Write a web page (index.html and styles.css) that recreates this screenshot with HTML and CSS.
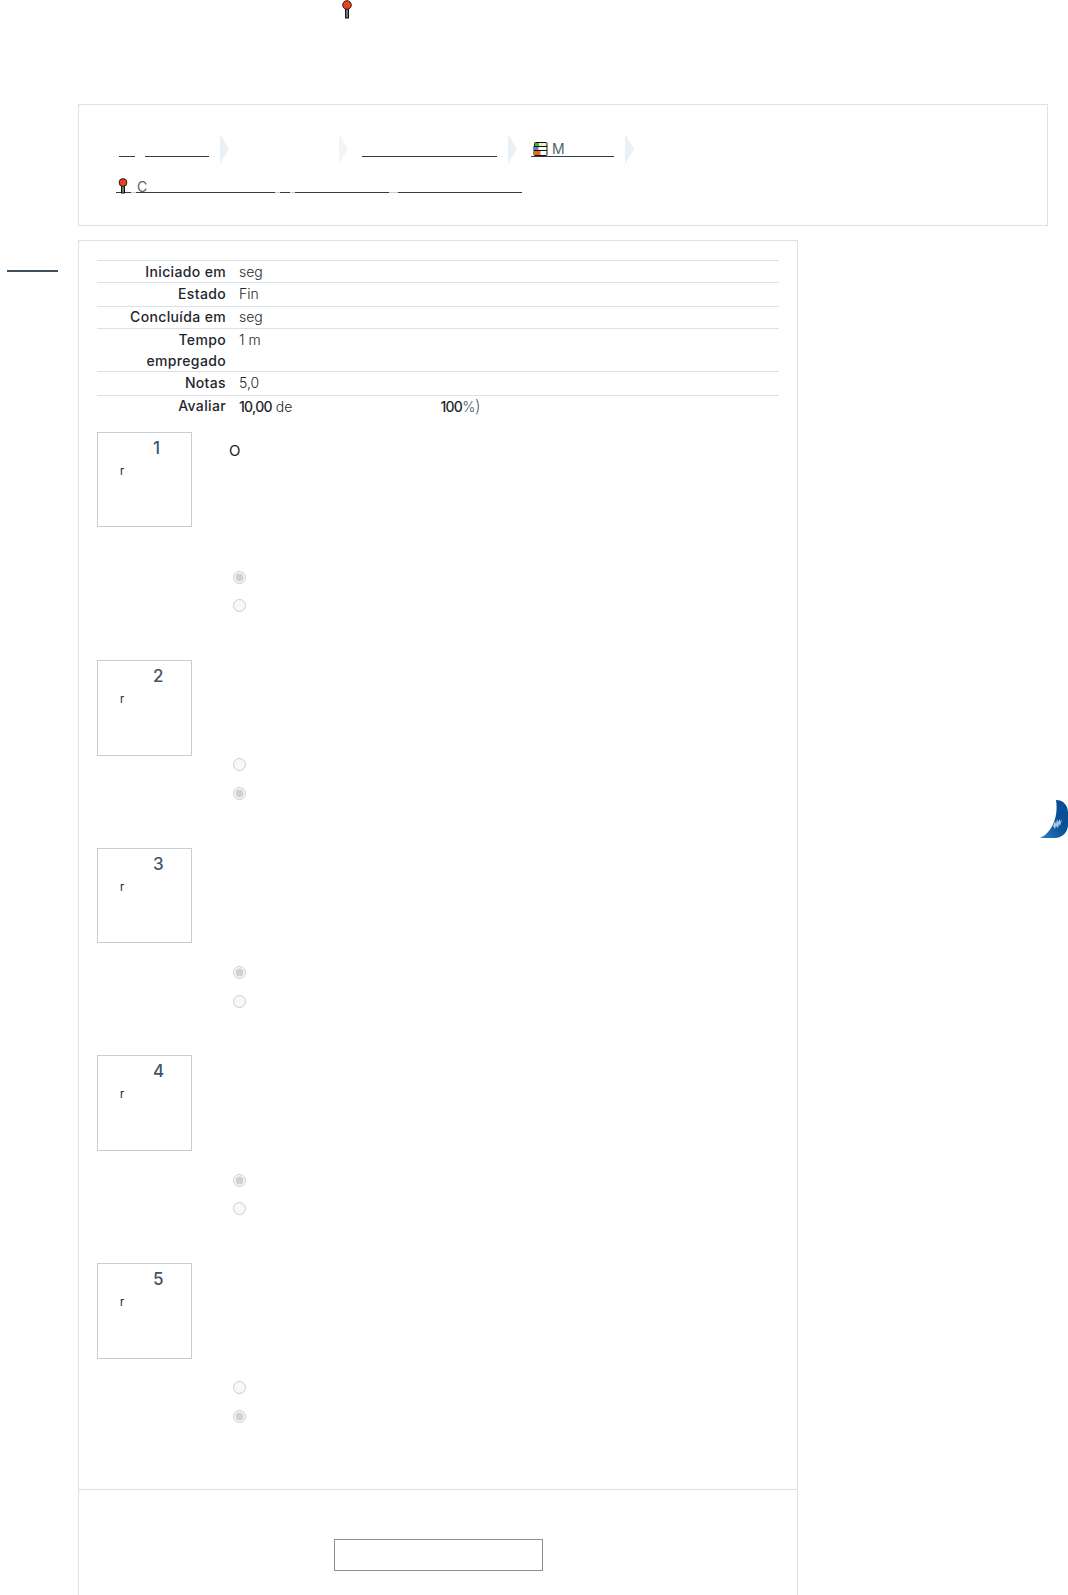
FILE: index.html
```html
<!DOCTYPE html>
<html lang="pt-BR">
<head>
<meta charset="utf-8">
<title>Revisão da tentativa</title>
<link rel="stylesheet" href="styles.css">
</head>
<body>
<div class="page">
  <header class="top">
    <svg class="pin" viewBox="0 0 10 19"><rect x="3.5" y="7" width="3" height="11" fill="#777" stroke="#111"/><circle cx="5" cy="5" r="4.3" fill="#f0401a" stroke="#222"/></svg>
  </header>

  <nav class="crumbs">
    <div class="crumb-row">
      <span class="link w-home"></span><span class="gap-a"></span><span class="link w-a"></span>
      <span class="chev"></span><span class="spacer-b"></span>
      <span class="chev chev-light"></span><span class="spacer-c"></span>
      <span class="link w-c"></span>
      <span class="chev"></span><span class="spacer-d"></span>
      <span class="link w-m">
        <svg class="book" viewBox="0 0 15 14"><rect x="1.5" y="0.5" width="12.5" height="4" rx="1" fill="#e9f5c8" stroke="#111"/><rect x="2" y="1" width="4" height="3" fill="#44bb11"/><rect x="1" y="4.5" width="13" height="4" fill="#fff" stroke="#111"/><rect x="1.5" y="5" width="4" height="3" fill="#3b8ee0"/><rect x="1" y="8.5" width="13" height="5" rx="1" fill="#fff" stroke="#111"/><rect x="1.5" y="9" width="6" height="4" fill="#f0651a"/></svg>
        <span class="crumb-text">M</span>
      </span>
      <span class="chev"></span>
    </div>
    <div class="crumb-row crumb-row-2">
      <span class="link w-pin">
        <svg class="pin pin-small" viewBox="0 0 10 16"><rect x="3.5" y="6" width="3" height="9" fill="#777" stroke="#111"/><circle cx="5" cy="4.5" r="3.9" fill="#f0401a" stroke="#222"/></svg>
      </span>
      <span class="gap-s"></span>
      <span class="link w-t1"><span class="crumb-text">C</span></span>
      <span class="gap-s"></span>
      <span class="link w-t2"></span>
      <span class="gap-s"></span>
      <span class="link w-t3"></span>
      <span class="gap-m"></span>
      <span class="link w-t4"></span>
    </div>
  </nav>

  <div class="main">
    <div class="side-line"></div>
    <section class="card">
      <div class="summary">
        <div class="row"><div class="label">Iniciado em</div><div class="value">seg</div></div>
        <div class="row"><div class="label">Estado</div><div class="value">Fin</div></div>
        <div class="row"><div class="label">Concluída em</div><div class="value">seg</div></div>
        <div class="row"><div class="label">Tempo empregado</div><div class="value">1 m</div></div>
        <div class="row"><div class="label">Notas</div><div class="value">5,0</div></div>
        <div class="row"><div class="label">Avaliar</div><div class="value"><b>10,00</b> de<span class="grade-gap"></span><b>100</b><span class="pct">%<span class="paren">)</span></span></div></div>
      </div>

      <article class="que que-1">
        <div class="info"><div class="num">1</div><div class="state">r</div></div>
        <div class="content"><p class="qtext">O</p>
          <div class="answers"><input type="radio" disabled checked><input type="radio" disabled></div></div>
      </article>
      <article class="que que-2">
        <div class="info"><div class="num">2</div><div class="state">r</div></div>
        <div class="content"><div class="answers"><input type="radio" disabled><input type="radio" disabled checked></div></div>
      </article>
      <article class="que que-3">
        <div class="info"><div class="num">3</div><div class="state">r</div></div>
        <div class="content"><div class="answers"><input type="radio" disabled checked><input type="radio" disabled></div></div>
      </article>
      <article class="que que-4">
        <div class="info"><div class="num">4</div><div class="state">r</div></div>
        <div class="content"><div class="answers"><input type="radio" disabled checked><input type="radio" disabled></div></div>
      </article>
      <article class="que que-5">
        <div class="info"><div class="num">5</div><div class="state">r</div></div>
        <div class="content"><div class="answers"><input type="radio" disabled><input type="radio" disabled checked></div></div>
      </article>

      <footer class="card-foot"><button class="finish" type="button" aria-label="Terminar revisão"></button></footer>
    </section>
  </div>

  <svg class="widget" viewBox="0 0 28 38">
    <defs><linearGradient id="moon" x1="0" y1="1" x2="1" y2="0"><stop offset="0" stop-color="#2f7fc0"/><stop offset=".5" stop-color="#0a5299"/><stop offset="1" stop-color="#064c96"/></linearGradient></defs>
    <path d="M16 0C24 0 28 6 28 13V25C28 32 22 38 15 38H0C10 34 19 19 16 0Z" fill="url(#moon)"/>
    <path d="M13 26l2-5 1 3 1-5 1 3 2-3 0 3 2-3-2 7-1-2-1 4-2-2-1 3z" fill="#dfeaf5" opacity=".75"/>
  </svg>
</div>
</body>
</html>
```
FILE: styles.css
```css
* { box-sizing: border-box; }
html, body { margin: 0; padding: 0; background: #fff; }
.page {
  position: relative;
  width: 1068px;
  height: 1595px;
  overflow: hidden;
  font-family: Inter, "Open Sans", "Liberation Sans", sans-serif;
  font-size: 14px;
  color: #3c4a54;
}
.top { height: 104px; padding-left: 342px; }
.pin { display: block; width: 10px; height: 19px; }
.pin-small { width: 10px; height: 16px; margin-left: 2px; }

.crumbs {
  margin-left: 78px;
  width: 970px;
  height: 122px;
  border: 1px solid #dbe2e6;
  padding: 29px 0 0 40px;
}
.crumb-row { display: flex; align-items: flex-end; height: 30px; }
.crumb-row-2 { margin-top: 7px; height: 22px; margin-left: -3px; }
.link { display: flex; align-items: flex-end; height: 100%; border-bottom: 1px solid #2c3e4c; margin-bottom: 7px; }
.crumb-row-2 .link { margin-bottom: 0; }
.chev {
  width: 0; height: 0;
  margin-left: 11px;
  border-left: 9px solid #e9f1f6;
  border-top: 15px solid transparent;
  border-bottom: 15px solid transparent;
}
.chev-light { border-left-color: #f2f5f8; }
.w-home { width: 16px; }
.gap-a { width: 10px; }
.w-a { width: 64px; }
.spacer-b { width: 99px; }
.spacer-c { width: 14px; }
.w-c { width: 135px; }
.spacer-d { width: 14px; }
.w-m { width: 83px; padding-left: 2px; }
.book { width: 15px; height: 14px; display: block; }
.crumb-text { line-height: 14px; color: #55626c; margin-left: 4px; }
.w-pin { width: 15px; }
.w-pin .pin-small { margin-bottom: -2px; }
.gap-s { width: 5px; border-bottom: 1px solid #c9d0d5; }
.gap-m { width: 9px; border-bottom: 1px solid #c9d0d5; }
.w-t1 { width: 139px; }
.w-t1 .crumb-text { margin-left: 1px; margin-bottom: -2px; }
.w-t2 { width: 10px; }
.w-t3 { width: 94px; }
.w-t4 { width: 124px; }

.main { position: relative; margin-top: 14px; padding-left: 78px; }
.side-line {
  position: absolute;
  left: 7px; top: 30px;
  width: 51px; height: 2px;
  background: #3f515d;
}
.card {
  width: 720px;
  height: 1400px;
  border: 1px solid #dbe2e6;
  padding: 19px 0 0;
}
.summary { margin: 0 18px; }
.row { display: flex; border-top: 1px solid #dbe2e6; line-height: 21px; height: 22px; }
.row:nth-child(2) { height: 24px; }
.row:nth-child(3) { line-height: 19px; }
.row:nth-child(4) { height: 43px; }
.row:nth-child(5) { height: 24px; }
.row:nth-child(6) { line-height: 20px; }
.label { width: 129px; padding-left: 20px; text-align: right; font-weight: 500; letter-spacing: .35px; color: #1f272d; flex: none; }
.value { margin-left: 13px; font-weight: 300; color: #1f272d; }
.value b { font-weight: 500; letter-spacing: -.7px; color: #1f272d; }
.grade-gap { display: inline-block; width: 148px; }
.pct { letter-spacing: -.4px; color: #4a555d; }
.paren { font-size: 17px; font-weight: 200; color: #1f272d; }

.que { display: flex; margin-left: 18px; }
.que-1 { margin-top: 15px; height: 228px; }
.que-2 { height: 188px; }
.que-3 { height: 207px; }
.que-4 { height: 208px; }
.que-5 { height: 226px; }
.info {
  width: 95px; height: 96px;
  border: 1px solid #c8cdd4;
  padding: 4px 0 0 22px;
  flex: none;
}
.que-1 .info, .que-3 .info { height: 95px; }
.num { font-size: 17px; line-height: 22px; font-weight: 500; color: #3f5567; padding-left: 33px; }
.state { font-size: 11px; line-height: 15px; color: #222; margin-top: 5px; }
.content { position: relative; padding-left: 38px; }
.qtext { margin: 0; position: absolute; top: 8px; left: 37px; font-size: 15px; line-height: 21px; color: #222; }
.answers { display: flex; flex-direction: column; gap: 16px; align-items: flex-start; padding-left: 3px; }
.answers input { margin: 0; width: 13px; height: 13px; }
.que-1 .answers { padding-top: 139px; gap: 15px; }
.que-2 .answers { padding-top: 98px; }
.que-3 .answers, .que-5 .answers { padding-top: 118px; }
.que-4 .answers { padding-top: 119px; gap: 15px; }

.card-foot { border-top: 1px solid #dbe2e6; padding-top: 49px; display: flex; justify-content: center; }
.finish { width: 209px; height: 32px; background: #fff; border: 1px solid #8e8e98; border-radius: 0; padding: 0; }

.widget { position: absolute; left: 1040px; top: 800px; width: 28px; height: 38px; }
```
